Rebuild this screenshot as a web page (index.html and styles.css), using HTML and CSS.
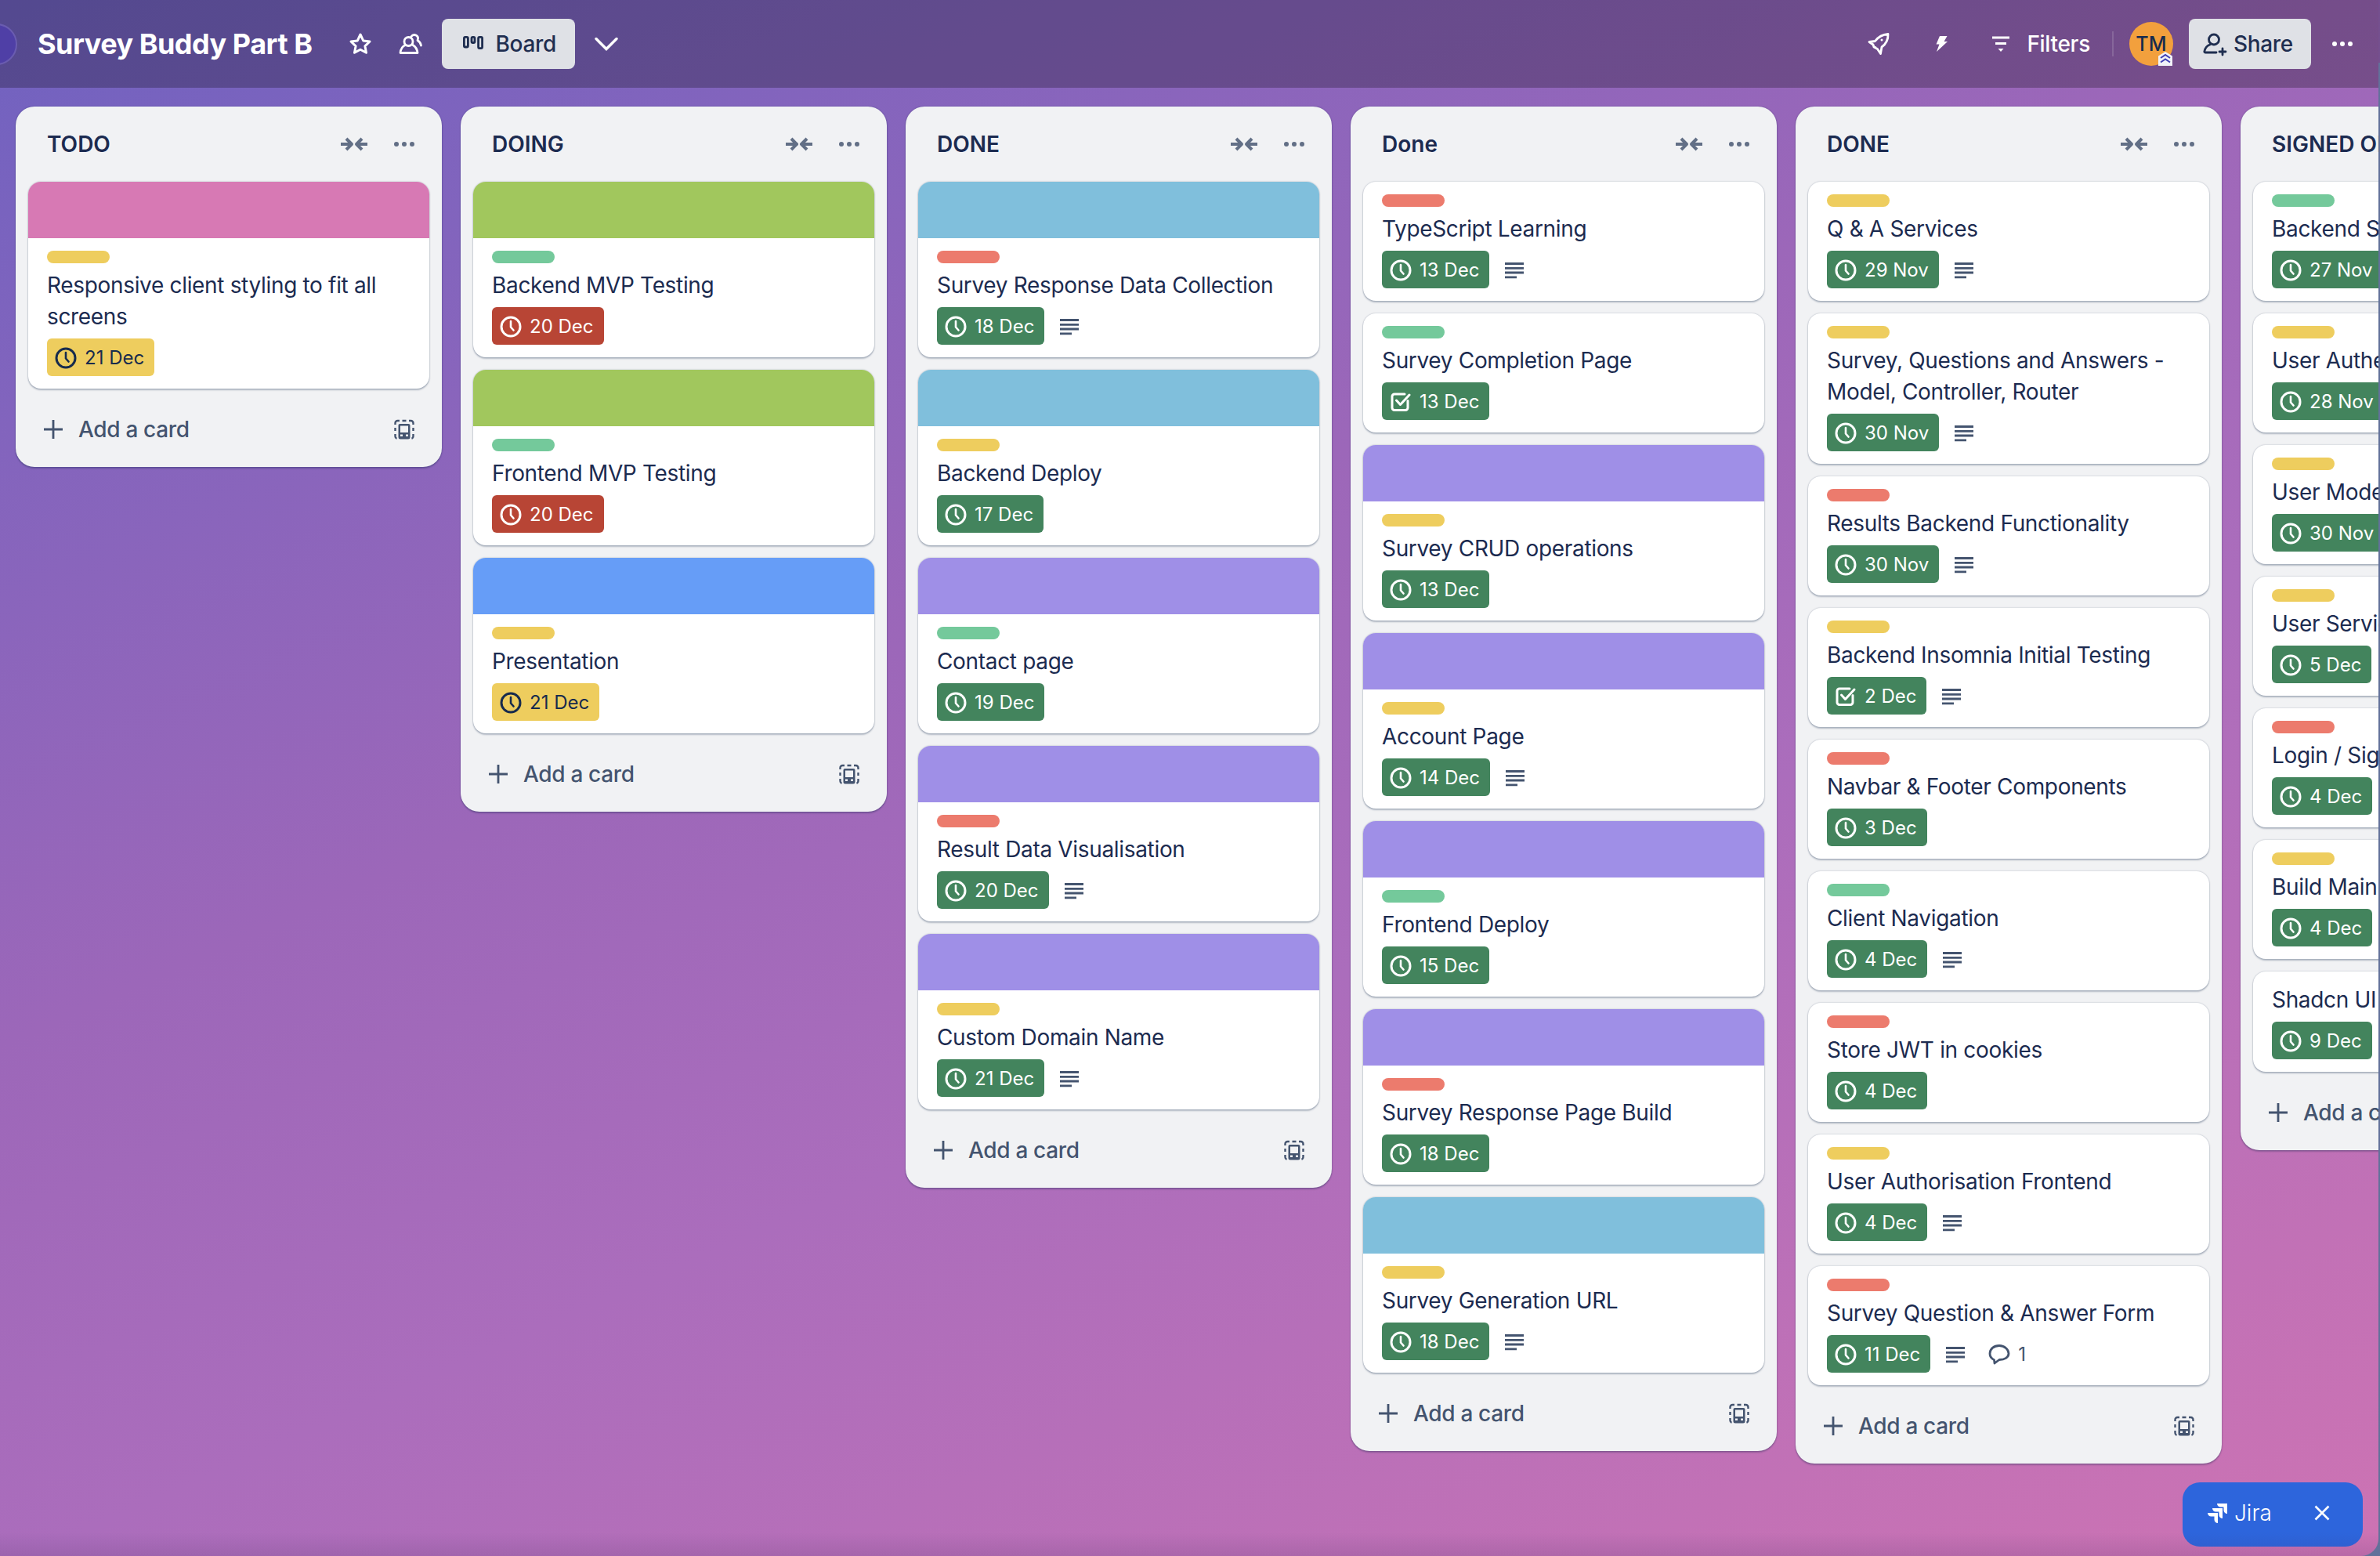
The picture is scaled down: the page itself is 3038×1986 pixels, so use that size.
FILE: index.html
```html
<!DOCTYPE html>
<html lang="en">
<head>
<meta charset="utf-8">
<title>Survey Buddy Part B</title>
<link rel="stylesheet" href="styles.css">
</head>
<body>
<svg class="defs" aria-hidden="true">
  <symbol id="i-clock" viewBox="0 0 32 32"><circle cx="16" cy="16" r="12" fill="none" stroke="currentColor" stroke-width="3"/><path d="M16 9v7.500l3.500 4" fill="none" stroke="currentColor" stroke-width="2.600" stroke-linecap="round" stroke-linejoin="round"/></symbol>
  <symbol id="i-check" viewBox="0 0 32 32"><path d="M25 14.500v9a3 3 0 0 1-3 3H8a3 3 0 0 1-3-3V9a3 3 0 0 1 3-3h13" fill="none" stroke="currentColor" stroke-width="3" stroke-linecap="round"/><path d="M10.500 14l5 5.500L27 7" fill="none" stroke="currentColor" stroke-width="3" stroke-linecap="round" stroke-linejoin="round"/></symbol>
  <symbol id="i-desc" viewBox="0 0 32 32"><path d="M4 8.500h24M4 14.300h24M4 20h24M4 25.800h15" fill="none" stroke="currentColor" stroke-width="2.800"/></symbol>
  <symbol id="i-comment" viewBox="0 0 32 32"><path d="M16 5.500c-7 0-12 4.500-12 10 0 3.600 2 6.500 5.500 8.200L10 28l6-4.500c7 0 12-3.200 12-8s-5-10-12-10z" fill="none" stroke="currentColor" stroke-width="2.800" stroke-linejoin="round"/></symbol>
  <symbol id="i-collapse" viewBox="0 0 36 20"><path d="M1 10h12M8 3l7 7-7 7M35 10H23M28 3l-7 7 7 7" fill="none" stroke="currentColor" stroke-width="4" stroke-linejoin="round"/></symbol>
  <symbol id="i-dots" viewBox="0 0 32 32"><circle cx="6" cy="16" r="3" fill="currentColor"/><circle cx="16" cy="16" r="3" fill="currentColor"/><circle cx="26" cy="16" r="3" fill="currentColor"/></symbol>
  <symbol id="i-plus" viewBox="0 0 32 32"><path d="M16 4v24M4 16h24" fill="none" stroke="currentColor" stroke-width="2.800"/></symbol>
  <symbol id="i-template" viewBox="0 0 32 32"><path d="M4.500 10V8a3 3 0 0 1 3-3h2.500M13.500 5h5M22 5h2.500a3 3 0 0 1 3 3v2M4.500 14v4M27.500 14v4M4.500 22v3a3 3 0 0 0 2 2.800M27.500 22v3a3 3 0 0 1-2 2.800" fill="none" stroke="currentColor" stroke-width="2.400"/><path d="M10.500 9h11a2 2 0 0 1 2 2v15a2.500 2.500 0 0 1-2.500 2.500H11A2.500 2.500 0 0 1 8.500 26V11a2 2 0 0 1 2-2zm.500 2.500V20h10v-8.500zM11 22.500v2.500h3v-2.500zm7 0v2.500h3v-2.500z" fill="currentColor" fill-rule="evenodd"/></symbol>
</svg>

<div class="window">
  <header class="topbar">
    <span class="workspace-dot"></span>
    <h1 class="board-name">Survey Buddy Part B</h1>
    <div class="bar-left">
      <svg class="icon32" viewBox="0 0 32 32"><path d="M16 4l3.700 7.900 8.300 1.100-6.100 5.800 1.600 8.500L16 23.200l-7.500 4.100 1.600-8.500L4 13l8.300-1.100z" fill="none" stroke="currentColor" stroke-width="3" stroke-linejoin="round"/></svg>
      <svg class="icon32 people" viewBox="0 0 32 32"><circle cx="13.500" cy="13" r="5.500" fill="none" stroke="currentColor" stroke-width="2.800"/><path d="M17 6.500a5 5 0 0 1 6-1.500c2.500 1.300 3 4 2 6.500 2.500 1.500 4 3.500 4.500 6.500M9.500 17.500C6 19 3.500 22 3 27.500h22c-.5-4.500-2.500-8-6-10" fill="none" stroke="currentColor" stroke-width="2.800" stroke-linecap="round" stroke-linejoin="round"/></svg>
      <div class="view-btn">
        <svg class="board-icon" viewBox="0 0 28 20"><rect x="2.400" y="1.400" width="5" height="12.600" rx="1.500"/><rect x="12" y="1.400" width="4" height="7.100" rx="1.500"/><rect x="20.600" y="1.400" width="5" height="14.200" rx="1.500"/></svg>
        <span>Board</span>
      </div>
      <svg class="icon32" viewBox="0 0 32 32"><path d="M3 9.500L16 22.500 29 9.500" fill="none" stroke="currentColor" stroke-width="3.400" stroke-linecap="round"/></svg>
    </div>
    <div class="bar-right">
      <svg class="icon32" viewBox="0 0 32 32"><path d="M4 13.500l7.500-1C16 6.500 22 4 28 3.500c.3 6-1.800 12-8 16.500l-1.500 8.500-4-6-4.500-2.500-1-3zM11 20l1.500 1" fill="none" stroke="currentColor" stroke-width="2.800" stroke-linejoin="round"/><circle cx="20" cy="11" r="1.500" fill="currentColor"/></svg>
      <svg class="icon32 bolt" viewBox="0 0 32 32"><path d="M14 6h9.500l-4 7H24L10 26l3.500-9.500H9.500z" fill="currentColor"/></svg>
      <div class="filters">
        <svg class="icon32" viewBox="0 0 32 32"><path d="M5 8h22M9 15.500h14" fill="none" stroke="currentColor" stroke-width="3"/><path d="M12.500 22h7L16 26z" fill="currentColor"/></svg>
        <span>Filters</span>
      </div>
      <span class="divider"></span>
      <div class="avatar">TM
        <svg class="avatar-badge" viewBox="0 0 18 18"><path d="M0 5.500L9 0l9 5.500V18H0z" fill="#f1f2f8"/><path d="M3 8l6-4 6 4M3 13.500l6-4 6 4" fill="none" stroke="#3f3fb5" stroke-width="2"/></svg>
      </div>
      <div class="view-btn share-btn">
        <svg class="icon32" viewBox="0 0 32 32"><circle cx="15" cy="10.500" r="6.500" fill="none" stroke="currentColor" stroke-width="2.800"/><path d="M18 27H4c-1 0-1.500-.8-1-2 1-4 2.500-6.500 7-8M22 26h8M26 22v8" fill="none" stroke="currentColor" stroke-width="2.800" stroke-linecap="round"/></svg>
        <span>Share</span>
      </div>
      <svg class="icon32 bar-more"><use href="#i-dots"/></svg>
    </div>
  </header>

  <main class="board">
    <section class="list">
      <div class="list-head"><h2>TODO</h2><span class="head-btn"><svg class="collapse"><use href="#i-collapse"/></svg></span><span class="head-btn"><svg class="icon32"><use href="#i-dots"/></svg></span></div>
      <div class="cards">
        <article class="card"><div class="cover pink"></div><div class="body"><span class="label yellow"></span><p>Responsive client styling to fit all screens</p><div class="meta"><span class="date due-soon"><svg class="icon32"><use href="#i-clock"/></svg>21 Dec</span></div></div></article>
      </div>
      <div class="list-foot"><svg class="icon32"><use href="#i-plus"/></svg><span>Add a card</span><svg class="icon32 tpl"><use href="#i-template"/></svg></div>
    </section>

    <section class="list">
      <div class="list-head"><h2>DOING</h2><span class="head-btn"><svg class="collapse"><use href="#i-collapse"/></svg></span><span class="head-btn"><svg class="icon32"><use href="#i-dots"/></svg></span></div>
      <div class="cards">
        <article class="card"><div class="cover lime"></div><div class="body"><span class="label green"></span><p>Backend MVP Testing</p><div class="meta"><span class="date overdue"><svg class="icon32"><use href="#i-clock"/></svg>20 Dec</span></div></div></article>
        <article class="card"><div class="cover lime"></div><div class="body"><span class="label green"></span><p>Frontend MVP Testing</p><div class="meta"><span class="date overdue"><svg class="icon32"><use href="#i-clock"/></svg>20 Dec</span></div></div></article>
        <article class="card"><div class="cover blue"></div><div class="body"><span class="label yellow"></span><p>Presentation</p><div class="meta"><span class="date due-soon"><svg class="icon32"><use href="#i-clock"/></svg>21 Dec</span></div></div></article>
      </div>
      <div class="list-foot"><svg class="icon32"><use href="#i-plus"/></svg><span>Add a card</span><svg class="icon32 tpl"><use href="#i-template"/></svg></div>
    </section>

    <section class="list">
      <div class="list-head"><h2>DONE</h2><span class="head-btn"><svg class="collapse"><use href="#i-collapse"/></svg></span><span class="head-btn"><svg class="icon32"><use href="#i-dots"/></svg></span></div>
      <div class="cards">
        <article class="card"><div class="cover sky"></div><div class="body"><span class="label red"></span><p>Survey Response Data Collection</p><div class="meta"><span class="date"><svg class="icon32"><use href="#i-clock"/></svg>18 Dec</span><svg class="icon32 desc"><use href="#i-desc"/></svg></div></div></article>
        <article class="card"><div class="cover sky"></div><div class="body"><span class="label yellow"></span><p>Backend Deploy</p><div class="meta"><span class="date"><svg class="icon32"><use href="#i-clock"/></svg>17 Dec</span></div></div></article>
        <article class="card"><div class="cover purple"></div><div class="body"><span class="label green"></span><p>Contact page</p><div class="meta"><span class="date"><svg class="icon32"><use href="#i-clock"/></svg>19 Dec</span></div></div></article>
        <article class="card"><div class="cover purple"></div><div class="body"><span class="label red"></span><p>Result Data Visualisation</p><div class="meta"><span class="date"><svg class="icon32"><use href="#i-clock"/></svg>20 Dec</span><svg class="icon32 desc"><use href="#i-desc"/></svg></div></div></article>
        <article class="card"><div class="cover purple"></div><div class="body"><span class="label yellow"></span><p>Custom Domain Name</p><div class="meta"><span class="date"><svg class="icon32"><use href="#i-clock"/></svg>21 Dec</span><svg class="icon32 desc"><use href="#i-desc"/></svg></div></div></article>
      </div>
      <div class="list-foot"><svg class="icon32"><use href="#i-plus"/></svg><span>Add a card</span><svg class="icon32 tpl"><use href="#i-template"/></svg></div>
    </section>

    <section class="list">
      <div class="list-head"><h2>Done</h2><span class="head-btn"><svg class="collapse"><use href="#i-collapse"/></svg></span><span class="head-btn"><svg class="icon32"><use href="#i-dots"/></svg></span></div>
      <div class="cards">
        <article class="card"><div class="body"><span class="label red"></span><p>TypeScript Learning</p><div class="meta"><span class="date"><svg class="icon32"><use href="#i-clock"/></svg>13 Dec</span><svg class="icon32 desc"><use href="#i-desc"/></svg></div></div></article>
        <article class="card"><div class="body"><span class="label green"></span><p>Survey Completion Page</p><div class="meta"><span class="date"><svg class="icon32"><use href="#i-check"/></svg>13 Dec</span></div></div></article>
        <article class="card"><div class="cover purple"></div><div class="body"><span class="label yellow"></span><p>Survey CRUD operations</p><div class="meta"><span class="date"><svg class="icon32"><use href="#i-clock"/></svg>13 Dec</span></div></div></article>
        <article class="card"><div class="cover purple"></div><div class="body"><span class="label yellow"></span><p>Account Page</p><div class="meta"><span class="date"><svg class="icon32"><use href="#i-clock"/></svg>14 Dec</span><svg class="icon32 desc"><use href="#i-desc"/></svg></div></div></article>
        <article class="card"><div class="cover purple"></div><div class="body"><span class="label green"></span><p>Frontend Deploy</p><div class="meta"><span class="date"><svg class="icon32"><use href="#i-clock"/></svg>15 Dec</span></div></div></article>
        <article class="card"><div class="cover purple"></div><div class="body"><span class="label red"></span><p>Survey Response Page Build</p><div class="meta"><span class="date"><svg class="icon32"><use href="#i-clock"/></svg>18 Dec</span></div></div></article>
        <article class="card"><div class="cover sky"></div><div class="body"><span class="label yellow"></span><p>Survey Generation URL</p><div class="meta"><span class="date"><svg class="icon32"><use href="#i-clock"/></svg>18 Dec</span><svg class="icon32 desc"><use href="#i-desc"/></svg></div></div></article>
      </div>
      <div class="list-foot"><svg class="icon32"><use href="#i-plus"/></svg><span>Add a card</span><svg class="icon32 tpl"><use href="#i-template"/></svg></div>
    </section>

    <section class="list">
      <div class="list-head"><h2>DONE</h2><span class="head-btn"><svg class="collapse"><use href="#i-collapse"/></svg></span><span class="head-btn"><svg class="icon32"><use href="#i-dots"/></svg></span></div>
      <div class="cards">
        <article class="card"><div class="body"><span class="label yellow"></span><p>Q &amp; A Services</p><div class="meta"><span class="date"><svg class="icon32"><use href="#i-clock"/></svg>29 Nov</span><svg class="icon32 desc"><use href="#i-desc"/></svg></div></div></article>
        <article class="card"><div class="body"><span class="label yellow"></span><p>Survey, Questions and Answers - Model, Controller, Router</p><div class="meta"><span class="date"><svg class="icon32"><use href="#i-clock"/></svg>30 Nov</span><svg class="icon32 desc"><use href="#i-desc"/></svg></div></div></article>
        <article class="card"><div class="body"><span class="label red"></span><p>Results Backend Functionality</p><div class="meta"><span class="date"><svg class="icon32"><use href="#i-clock"/></svg>30 Nov</span><svg class="icon32 desc"><use href="#i-desc"/></svg></div></div></article>
        <article class="card"><div class="body"><span class="label yellow"></span><p>Backend Insomnia Initial Testing</p><div class="meta"><span class="date"><svg class="icon32"><use href="#i-check"/></svg>2 Dec</span><svg class="icon32 desc"><use href="#i-desc"/></svg></div></div></article>
        <article class="card"><div class="body"><span class="label red"></span><p>Navbar &amp; Footer Components</p><div class="meta"><span class="date"><svg class="icon32"><use href="#i-clock"/></svg>3 Dec</span></div></div></article>
        <article class="card"><div class="body"><span class="label green"></span><p>Client Navigation</p><div class="meta"><span class="date"><svg class="icon32"><use href="#i-clock"/></svg>4 Dec</span><svg class="icon32 desc"><use href="#i-desc"/></svg></div></div></article>
        <article class="card"><div class="body"><span class="label red"></span><p>Store JWT in cookies</p><div class="meta"><span class="date"><svg class="icon32"><use href="#i-clock"/></svg>4 Dec</span></div></div></article>
        <article class="card"><div class="body"><span class="label yellow"></span><p>User Authorisation Frontend</p><div class="meta"><span class="date"><svg class="icon32"><use href="#i-clock"/></svg>4 Dec</span><svg class="icon32 desc"><use href="#i-desc"/></svg></div></div></article>
        <article class="card"><div class="body"><span class="label red"></span><p>Survey Question &amp; Answer Form</p><div class="meta"><span class="date"><svg class="icon32"><use href="#i-clock"/></svg>11 Dec</span><svg class="icon32 desc"><use href="#i-desc"/></svg><span class="comments"><svg class="icon32"><use href="#i-comment"/></svg>1</span></div></div></article>
      </div>
      <div class="list-foot"><svg class="icon32"><use href="#i-plus"/></svg><span>Add a card</span><svg class="icon32 tpl"><use href="#i-template"/></svg></div>
    </section>

    <section class="list">
      <div class="list-head"><h2>SIGNED OFF</h2><span class="head-btn"><svg class="collapse"><use href="#i-collapse"/></svg></span><span class="head-btn"><svg class="icon32"><use href="#i-dots"/></svg></span></div>
      <div class="cards">
        <article class="card"><div class="body"><span class="label green"></span><p>Backend Setup</p><div class="meta"><span class="date"><svg class="icon32"><use href="#i-clock"/></svg>27 Nov</span></div></div></article>
        <article class="card"><div class="body"><span class="label yellow"></span><p>User Authentication</p><div class="meta"><span class="date"><svg class="icon32"><use href="#i-clock"/></svg>28 Nov</span></div></div></article>
        <article class="card"><div class="body"><span class="label yellow"></span><p>User Model</p><div class="meta"><span class="date"><svg class="icon32"><use href="#i-clock"/></svg>30 Nov</span></div></div></article>
        <article class="card"><div class="body"><span class="label yellow"></span><p>User Services</p><div class="meta"><span class="date"><svg class="icon32"><use href="#i-clock"/></svg>5 Dec</span></div></div></article>
        <article class="card"><div class="body"><span class="label red"></span><p>Login / Signup</p><div class="meta"><span class="date"><svg class="icon32"><use href="#i-clock"/></svg>4 Dec</span></div></div></article>
        <article class="card"><div class="body"><span class="label yellow"></span><p>Build Main Page</p><div class="meta"><span class="date"><svg class="icon32"><use href="#i-clock"/></svg>4 Dec</span></div></div></article>
        <article class="card"><div class="body"><p>Shadcn UI</p><div class="meta"><span class="date"><svg class="icon32"><use href="#i-clock"/></svg>9 Dec</span></div></div></article>
      </div>
      <div class="list-foot"><svg class="icon32"><use href="#i-plus"/></svg><span>Add a card</span><svg class="icon32 tpl"><use href="#i-template"/></svg></div>
    </section>
  </main>

  <div class="jira-chip">
    <svg class="jira-logo" viewBox="0 0 25 25"><path d="M12 0h13v13a4.500 4.500 0 0 1-4.500-4.500V4.500H16.500A4.500 4.500 0 0 1 12 0z"/><path d="M6 6h13v13a4.500 4.500 0 0 1-4.500-4.500v-4h-4A4.500 4.500 0 0 1 6 6z"/><path d="M0 12h13v13a4.500 4.500 0 0 1-4.500-4.500v-4h-4A4.500 4.500 0 0 1 0 12z"/></svg>
    <span>Jira</span>
    <svg class="jira-close" viewBox="0 0 20 20"><path d="M1.500 1.500l17 17M18.500 1.500l-17 17" fill="none" stroke="currentColor" stroke-width="2.600"/></svg>
  </div>
  <div class="bottom-fade"></div>
</div>
</body>
</html>
```

FILE: styles.css
```css
* { box-sizing: border-box; }
html, body { margin: 0; height: 100%; }
body {
  width: 3038px;
  height: 1986px;
  overflow: hidden;
  background: linear-gradient(180deg, #75508f 0, #75508f 80px, #62719a 80px);
  font-family: "Inter", "Liberation Sans", sans-serif;
  color: #172b4d;
}
.defs { position: absolute; width: 0; height: 0; }

.window {
  position: relative;
  width: 3036px;
  height: 1986px;
  display: flex;
  flex-direction: column;
  overflow: hidden;
  border-bottom-right-radius: 22px;
  background: linear-gradient(156deg, #7062c0 0%, #9c67b9 40%, #ab6dbc 60%, #cd73b3 100%);
}

.icon32 { width: 32px; height: 32px; flex: none; display: block; }

/* top bar */
.topbar {
  position: relative;
  flex: none;
  height: 112px;
  display: flex;
  align-items: center;
  padding-left: 48px;
  background: rgba(0, 0, 0, .25);
  color: #fff;
}
.workspace-dot {
  position: absolute;
  left: -31px;
  top: 30px;
  width: 53px;
  height: 53px;
  border-radius: 50%;
  background: #4f3fa6;
  border: 2px solid #6a5cb0;
}
.workspace-dot::after {
  content: "";
  position: absolute;
  right: 20px;
  top: 20px;
  width: 6px;
  height: 6px;
  border-radius: 50%;
  background: #fff;
}
.board-name {
  margin: 0;
  font-size: 36px;
  line-height: 48px;
  font-weight: 700;
  letter-spacing: -.5px;
  white-space: nowrap;
}
.bar-left {
  display: flex;
  align-items: center;
  gap: 24px;
  margin-left: 46px;
}
.people { margin-left: 8px; }
.view-btn {
  height: 64px;
  display: flex;
  align-items: center;
  gap: 14px;
  padding: 0 24px 0 26px;
  border-radius: 8px;
  background: #dfe1e6;
  color: #1f2e50;
  font-size: 28px;
  font-weight: 500;
  letter-spacing: -.3px;
}
.board-icon { width: 28px; height: 20px; flex: none; }
.board-icon rect { fill: none; stroke: currentColor; stroke-width: 2.800; }

.bar-right {
  margin-left: auto;
  display: flex;
  align-items: center;
  padding-right: 30px;
}
.bolt { margin-left: 48px; }
.filters {
  display: flex;
  align-items: center;
  gap: 17px;
  margin-left: 44px;
  font-size: 28px;
  font-weight: 500;
  letter-spacing: -.3px;
}
.divider {
  width: 2px;
  height: 32px;
  margin: 0 20px 0 28px;
  background: rgba(255, 255, 255, .15);
}
.avatar {
  position: relative;
  width: 56px;
  height: 56px;
  border-radius: 50%;
  background: #f2a03d;
  color: #172b4d;
  font-size: 25px;
  font-weight: 500;
  display: flex;
  align-items: center;
  justify-content: center;
}
.avatar-badge {
  position: absolute;
  right: 1px;
  bottom: 0;
  width: 18px;
  height: 18px;
}
.share-btn {
  margin-left: 20px;
  gap: 8px;
  padding: 0 23px 0 17px;
}
.bar-more { margin-left: 24px; }

/* board */
.board {
  flex: 1;
  display: flex;
  align-items: flex-start;
  gap: 24px;
  padding: 24px 0 0 20px;
  min-height: 0;
}
.list {
  flex: 0 0 544px;
  background: #f1f2f4;
  border-radius: 24px;
  box-shadow: 0 2px 2px rgba(9, 30, 66, .25), 0 0 2px rgba(9, 30, 66, .31);
}
.list-head {
  display: flex;
  align-items: center;
  padding: 16px 16px 16px 40px;
  height: 96px;
}
.list-head h2 {
  flex: 1;
  margin: 0;
  font-size: 28px;
  line-height: 40px;
  font-weight: 600;
  color: #1c2b50;
  white-space: nowrap;
  overflow: hidden;
}
.head-btn {
  width: 64px;
  height: 64px;
  flex: none;
  display: flex;
  align-items: center;
  justify-content: center;
  color: #626f86;
}
.collapse { width: 36px; height: 20px; display: block; }

.cards {
  display: flex;
  flex-direction: column;
  gap: 16px;
  padding: 0 16px;
}
.card {
  background: #fff;
  border-radius: 16px;
  overflow: hidden;
  box-shadow: 0 2px 2px rgba(9, 30, 66, .25), 0 0 2px rgba(9, 30, 66, .31);
}
.cover { height: 72px; }
.pink { background: #d779b4; }
.lime { background: #a1c75d; }
.sky { background: #80bfdc; }
.purple { background: #9f8fe7; }
.blue { background: #669df7; }

.body { padding: 16px 24px; }
.label {
  display: block;
  width: 80px;
  height: 16px;
  border-radius: 8px;
  margin-bottom: 8px;
}
.yellow { background: #eecd5e; }
.green { background: #74c99b; }
.red { background: #ec7b6d; }

.body p {
  margin: 0 0 8px;
  font-size: 28px;
  line-height: 40px;
  letter-spacing: -.33px;
  color: #1c2b50;
  white-space: normal;
}
.meta {
  display: flex;
  align-items: center;
  height: 48px;
}
.date {
  height: 48px;
  display: flex;
  align-items: center;
  gap: 8px;
  padding: 1px 13px 0 8px;
  border-radius: 6px;
  background: #43845d;
  color: #fff;
  font-size: 24px;
  line-height: 32px;
}
.due-soon { background: #eecd5e; color: #172b4d; }
.overdue { background: #b84535; }
.desc { margin-left: 16px; color: #44546f; }
.comments {
  display: flex;
  align-items: center;
  gap: 8px;
  margin-left: 24px;
  font-size: 24px;
  color: #44546f;
}

.list-foot {
  display: flex;
  align-items: center;
  height: 100px;
  padding: 20px 32px 16px;
  color: #44546f;
  font-size: 28px;
  font-weight: 500;
  letter-spacing: -.33px;
}
.list-foot span { margin-left: 16px; flex: 1; white-space: nowrap; }

/* floating chip */
.jira-chip {
  position: absolute;
  left: 2786px;
  top: 1892px;
  width: 230px;
  height: 82px;
  display: flex;
  align-items: center;
  padding: 0 0 4px 32px;
  border-radius: 22px;
  background: #2d65dc;
  color: #fff;
  font-size: 28px;
  font-weight: 300;
}
.jira-logo { width: 25px; height: 25px; fill: #fff; flex: none; }
.jira-chip span { margin-left: 9px; }
.jira-close { width: 20px; height: 20px; margin-left: auto; margin-right: 42px; }

.bottom-fade {
  position: absolute;
  left: 0;
  right: 0;
  bottom: 0;
  height: 30px;
  background: linear-gradient(180deg, rgba(60, 40, 90, 0), rgba(60, 40, 90, .14));
  pointer-events: none;
}
```
